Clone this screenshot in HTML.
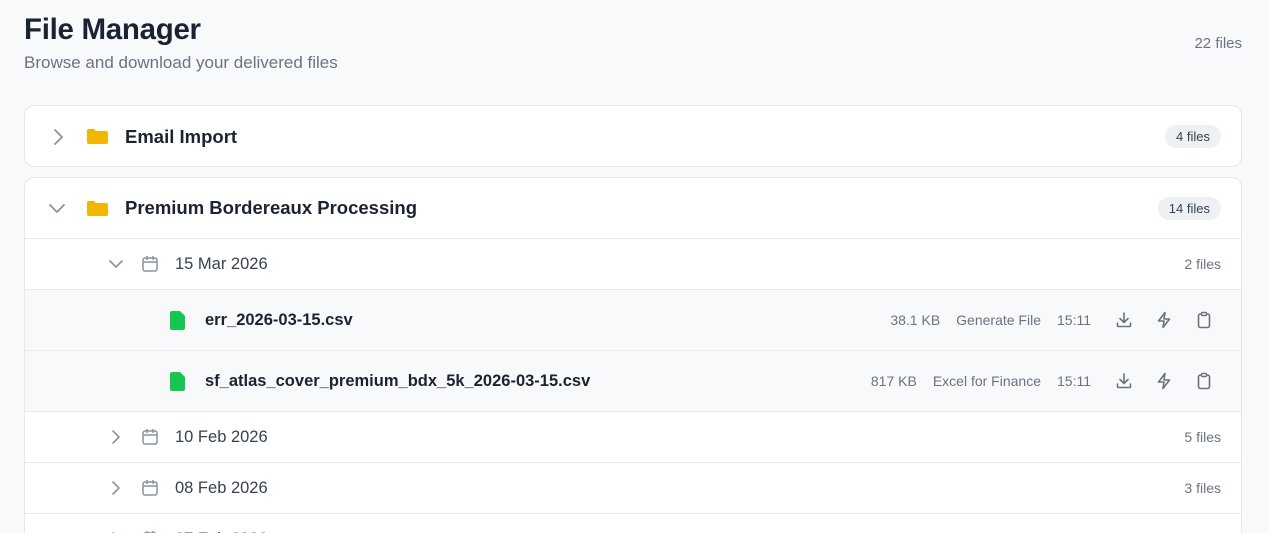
<!DOCTYPE html>
<html><head><meta charset="utf-8"><style>
*{box-sizing:border-box;margin:0;padding:0}
html,body{width:1269px;height:533px;overflow:hidden}
body{background:#f8f9fb;font-family:"Liberation Sans",sans-serif;color:#1b2333;position:relative}
h1{position:absolute;left:24px;top:13px;font-size:29.5px;font-weight:700;letter-spacing:-0.3px}
.sub{position:absolute;left:24px;top:53px;font-size:17px;color:#6b7280}
.total{position:absolute;right:27px;top:35px;font-size:15px;color:#6b7280}
.card{position:absolute;left:24px;width:1218px;background:#fff;border:1px solid #e5e7eb;border-radius:10px;overflow:hidden}
.row{position:relative;display:flex;align-items:center;border-bottom:1px solid #e8eaee}
.fh{height:61px}
.fname{position:absolute;left:100px;font-size:18.5px;font-weight:700;color:#1b2333}
.badge{position:absolute;right:20px;background:#eef0f3;border-radius:12px;font-size:13px;padding:4px 11px;color:#374151}
.chev{position:absolute}
.folder{position:absolute;left:62px;width:21px;height:15px}
.dr{height:51px}
.dlabel{position:absolute;left:150px;font-size:16.5px;color:#374151;top:16px}
.dcount{position:absolute;right:20px;font-size:14px;color:#6b7280}
.file{height:61px;background:#f8f9fb}
.fn{position:absolute;left:180px;font-size:16.5px;font-weight:700;color:#1b2333}
.meta{position:absolute;right:150px;font-size:14px;color:#6b7280;display:flex;gap:16px}
.ic{position:absolute;top:21px}
</style></head><body>
<h1>File Manager</h1>
<div class="sub">Browse and download your delivered files</div>
<div class="total">22 files</div>

<div class="card" style="top:105px;height:62px">
 <div class="row fh" style="border:none">
  <svg class="chev" style="left:26px" width="14" height="18" viewBox="0 0 14 18"><path d="M4 2l7 7-7 7" fill="none" stroke="#8b93a1" stroke-width="1.8" stroke-linecap="round" stroke-linejoin="round"/></svg>
  <svg class="folder" viewBox="0 0 21 15"><path d="M0 2a2 2 0 0 1 2-2h5l2 2h10a2 2 0 0 1 2 2v9a2 2 0 0 1-2 2H2a2 2 0 0 1-2-2z" fill="#f2b705"/></svg>
  <div class="fname">Email Import</div>
  <div class="badge">4 files</div>
 </div>
</div>

<div class="card" style="top:177px;height:370px">
 <div class="row fh">
  <svg class="chev" style="left:23px" width="18" height="14" viewBox="0 0 18 14"><path d="M2 4l7 7 7-7" fill="none" stroke="#8b93a1" stroke-width="1.8" stroke-linecap="round" stroke-linejoin="round"/></svg>
  <svg class="folder" viewBox="0 0 21 15"><path d="M0 2a2 2 0 0 1 2-2h5l2 2h10a2 2 0 0 1 2 2v9a2 2 0 0 1-2 2H2a2 2 0 0 1-2-2z" fill="#f2b705"/></svg>
  <div class="fname">Premium Bordereaux Processing</div>
  <div class="badge">14 files</div>
 </div>
 <div class="row dr">
  <svg class="chev" style="left:83px" width="16" height="12" viewBox="0 0 16 12"><path d="M2 3l6 6 6-6" fill="none" stroke="#8b93a1" stroke-width="1.6" stroke-linecap="round" stroke-linejoin="round"/></svg>
  <svg class="chev" style="left:116px" width="18" height="18" viewBox="0 0 18 18"><rect x="2" y="3" width="14" height="13" rx="2" fill="none" stroke="#8b93a1" stroke-width="1.5"/><path d="M2 7h14M6 1v4M12 1v4" stroke="#8b93a1" stroke-width="1.5"/></svg>
  <div class="dlabel">15 Mar 2026</div><div class="dcount">2 files</div>
 </div>
 <div class="row file">
  <svg class="chev" style="left:145px" width="15" height="19" viewBox="0 0 15 19"><path d="M2 0h8l5 5v12a2 2 0 0 1-2 2H2a2 2 0 0 1-2-2V2a2 2 0 0 1 2-2z" fill="#16c653"/></svg>
  <div class="fn">err_2026-03-15.csv</div>
  <div class="meta"><span>38.1 KB</span><span>Generate File</span><span>15:11</span></div>
  ICONS
 </div>
 <div class="row file">
  <svg class="chev" style="left:145px" width="15" height="19" viewBox="0 0 15 19"><path d="M2 0h8l5 5v12a2 2 0 0 1-2 2H2a2 2 0 0 1-2-2V2a2 2 0 0 1 2-2z" fill="#16c653"/></svg>
  <div class="fn">sf_atlas_cover_premium_bdx_5k_2026-03-15.csv</div>
  <div class="meta"><span>817 KB</span><span>Excel for Finance</span><span>15:11</span></div>
  ICONS
 </div>
 <div class="row dr">
  <svg class="chev" style="left:85px" width="12" height="16" viewBox="0 0 12 16"><path d="M3 2l6 6-6 6" fill="none" stroke="#8b93a1" stroke-width="1.6" stroke-linecap="round" stroke-linejoin="round"/></svg>
  <svg class="chev" style="left:116px" width="18" height="18" viewBox="0 0 18 18"><rect x="2" y="3" width="14" height="13" rx="2" fill="none" stroke="#8b93a1" stroke-width="1.5"/><path d="M2 7h14M6 1v4M12 1v4" stroke="#8b93a1" stroke-width="1.5"/></svg>
  <div class="dlabel">10 Feb 2026</div><div class="dcount">5 files</div>
 </div>
 <div class="row dr">
  <svg class="chev" style="left:85px" width="12" height="16" viewBox="0 0 12 16"><path d="M3 2l6 6-6 6" fill="none" stroke="#8b93a1" stroke-width="1.6" stroke-linecap="round" stroke-linejoin="round"/></svg>
  <svg class="chev" style="left:116px" width="18" height="18" viewBox="0 0 18 18"><rect x="2" y="3" width="14" height="13" rx="2" fill="none" stroke="#8b93a1" stroke-width="1.5"/><path d="M2 7h14M6 1v4M12 1v4" stroke="#8b93a1" stroke-width="1.5"/></svg>
  <div class="dlabel">08 Feb 2026</div><div class="dcount">3 files</div>
 </div>
 <div class="row dr">
  <svg class="chev" style="left:85px" width="12" height="16" viewBox="0 0 12 16"><path d="M3 2l6 6-6 6" fill="none" stroke="#8b93a1" stroke-width="1.6" stroke-linecap="round" stroke-linejoin="round"/></svg>
  <svg class="chev" style="left:116px" width="18" height="18" viewBox="0 0 18 18"><rect x="2" y="3" width="14" height="13" rx="2" fill="none" stroke="#8b93a1" stroke-width="1.5"/><path d="M2 7h14M6 1v4M12 1v4" stroke="#8b93a1" stroke-width="1.5"/></svg>
  <div class="dlabel">07 Feb 2026</div><div class="dcount">4 files</div>
 </div>
</div>
<script>
var ic='<svg class="ic" style="left:1090px" width="18" height="18" viewBox="0 0 18 18"><path d="M9 2v9M5 7.5l4 4 4-4M2.5 12v2.5a1 1 0 0 0 1 1h11a1 1 0 0 0 1-1V12" fill="none" stroke="#6b7280" stroke-width="1.6" stroke-linecap="round" stroke-linejoin="round"/></svg>'+
'<svg class="ic" style="left:1130px" width="18" height="18" viewBox="0 0 18 18"><path d="M10 1.5L3.5 10H9l-1 6.5L14.5 8H9z" fill="none" stroke="#6b7280" stroke-width="1.6" stroke-linejoin="round"/></svg>'+
'<svg class="ic" style="left:1170px" width="18" height="18" viewBox="0 0 18 18"><rect x="3.5" y="3" width="11" height="13.5" rx="2" fill="none" stroke="#6b7280" stroke-width="1.6"/><rect x="6.5" y="1.5" width="5" height="3" rx="1" fill="#fff" stroke="#6b7280" stroke-width="1.4"/></svg>';
document.querySelectorAll('.file').forEach(function(r){r.innerHTML=r.innerHTML.replace('ICONS',ic);});
</script>
</body></html>
